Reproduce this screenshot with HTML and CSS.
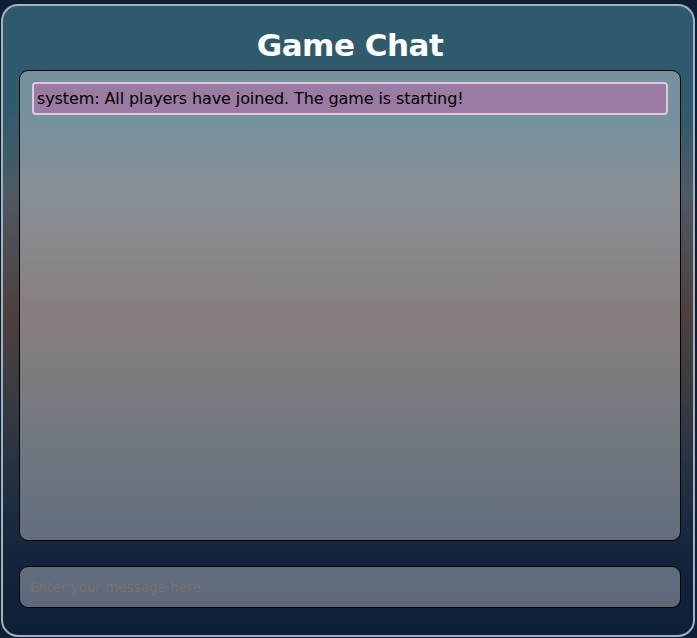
FILE: index.html
```html
<!DOCTYPE html>
<html lang="en">
<head>
<meta charset="utf-8">
<title>Game Chat</title>
<link rel="stylesheet" href="styles.css">
</head>
<body>
<div class="chat-panel">
  <h1 class="chat-title">Game Chat</h1>
  <div class="chat-log">
    <div class="chat-msg">system: All players have joined. The game is starting!</div>
  </div>
  <input class="chat-input" type="text" placeholder="Enter your message here">
</div>
</body>
</html>
```
FILE: styles.css
```css
html, body {
  margin: 0;
  padding: 0;
  background: #0e1f38;
}
body {
  padding-top: 4px;
  font-family: "DejaVu Sans", "Noto Sans", sans-serif;
}
.chat-panel {
  box-sizing: border-box;
  width: 694px;
  height: 633px;
  margin-left: 1px;
  border: 2px solid #a3b1bd;
  border-radius: 17px;
  background: linear-gradient(to bottom,
    #2f5a6c 0%,
    #305b6d 17%,
    #4f5a64 30%,
    #4d3f3e 49%,
    #383c42 62%,
    #1c2c40 80%,
    #13243c 88%,
    #0e1f38 100%);
  padding: 0 12px 0 16px;
  display: flex;
  flex-direction: column;
}
.chat-title {
  margin: 19px 0 0;
  height: 45px;
  text-align: center;
  color: #ffffff;
  font-size: 31px;
  font-weight: bold;
  line-height: 40px;
  letter-spacing: -0.5px;
}
.chat-log {
  box-sizing: border-box;
  height: 471px;
  border: 1px solid #000;
  border-radius: 9px;
  background: rgba(255, 255, 255, 0.33);
  padding: 11px 12px;
}
.chat-msg {
  box-sizing: border-box;
  height: 33px;
  background: #9b7ba3;
  border: 2px solid #dcc8e0;
  border-radius: 4px;
  padding: 0 3px;
  font-size: 16px;
  line-height: 29px;
  color: #000;
  letter-spacing: -0.1px;
}
.chat-input {
  box-sizing: border-box;
  margin-top: 25px;
  height: 42px;
  width: 100%;
  border: 1px solid #000;
  border-radius: 9px;
  background: rgba(255, 255, 255, 0.33);
  padding: 0 10px;
  font-family: "DejaVu Sans", "Noto Sans", sans-serif;
  font-size: 13.5px;
  outline: none;
}
.chat-input::placeholder {
  color: #747174;
}
```
